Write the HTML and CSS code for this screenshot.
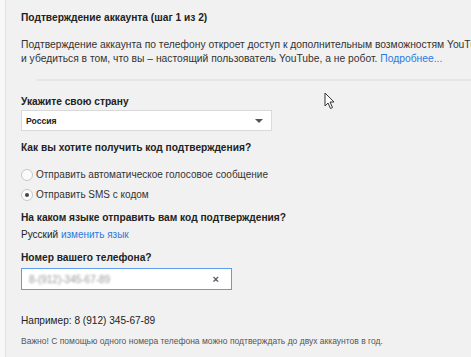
FILE: index.html
```html
<!DOCTYPE html>
<html lang="ru">
<head>
<meta charset="utf-8">
<link rel="stylesheet" href="styles.css">
</head>
<body>
<div class="page">
  <div class="rail"></div>
  <main class="content">
    <h1 class="title">Подтверждение аккаунта (шаг 1 из 2)</h1>
    <p class="intro">Подтверждение аккаунта по телефону откроет доступ к дополнительным возможностям YouTube<br>и убедиться в том, что вы – настоящий пользователь YouTube, а не робот. <a class="link" href="#">Подробнее...</a></p>
    <div class="sep"></div>
    <div class="label country">Укажите свою страну</div>
    <div class="select"><span class="select-text">Россия</span><span class="caret"></span></div>
    <div class="label q">Как вы хотите получить код подтверждения?</div>
    <div class="radios">
      <label class="radio"><span class="dot"></span>Отправить автоматическое голосовое сообщение</label>
      <label class="radio"><span class="dot on"></span>Отправить SMS с кодом</label>
    </div>
    <div class="label lang-q">На каком языке отправить вам код подтверждения?</div>
    <div class="lang">Русский <a class="link" href="#">изменить язык</a></div>
    <div class="label phone-q">Номер вашего телефона?</div>
    <div class="input"><span class="blur">8-(912)-345-67-89</span><span class="clear">×</span></div>
    <div class="example">Например: 8 (912) 345-67-89</div>
    <div class="note">Важно! С помощью одного номера телефона можно подтверждать до двух аккаунтов в год.</div>
  </main>
</div>
<svg class="cursor" width="12" height="18" viewBox="0 0 12 18"><path d="M1 1 L1 14 L4 11 L6.5 16.5 L8.5 15.5 L6 10 L10 10 Z" fill="#fff" stroke="#333" stroke-width="1" stroke-linejoin="round"/></svg>
</body>
</html>
```
FILE: styles.css
```css
* { box-sizing: border-box; }
html, body { margin: 0; padding: 0; }
body {
  background: #f1f1f1;
  font-family: "Liberation Sans", Arial, sans-serif;
  color: #333;
  width: 471px;
  height: 357px;
  overflow: hidden;
  position: relative;
}
.page { display: flex; height: 357px; }
.rail {
  width: 6px;
  flex: none;
  background: #f8f8f8;
  border-right: 1px solid #e3e3e3;
}
.content {
  flex: 1;
  padding: 11px 0 0 15px;
  white-space: nowrap;
  overflow: hidden;
}
.title {
  margin: 0;
  font-size: 10.2px;
  line-height: 13px;
  font-weight: bold;
  color: #222;
}
.intro {
  margin: 14px 0 0;
  font-size: 10.3px;
  line-height: 14px;
  color: #333;
}
.link { color: #2a7ae2; text-decoration: none; }
.sep {
  margin: 13px 0 0 15px;
  height: 2px;
  background: #e6e6e6;
}
.label {
  font-size: 10.2px;
  line-height: 13px;
  font-weight: bold;
  color: #222;
}
.label.country { margin-top: 14px; }
.select {
  margin-top: 2px;
  width: 251px;
  height: 21px;
  background: #fff;
  border: 1px solid #d9d9d9;
  display: flex;
  align-items: center;
  justify-content: space-between;
  padding: 0 8px 0 4px;
}
.select-text { font-size: 8.6px; font-weight: bold; color: #222; }
.caret {
  width: 0; height: 0;
  border-left: 4px solid transparent;
  border-right: 4px solid transparent;
  border-top: 4px solid #555;
}
.label.q { margin-top: 10px; }
.radios { margin-top: 14px; display: flex; flex-direction: column; gap: 7px; }
.radio {
  display: flex;
  align-items: center;
  font-size: 10px;
  line-height: 13px;
  color: #333;
}
.dot {
  width: 12px; height: 12px;
  border-radius: 50%;
  border: 1px solid #c8c8c8;
  background: #fafafa;
  margin-right: 3px;
  position: relative;
}
.dot.on::after {
  content: "";
  position: absolute;
  left: 3px; top: 3px;
  width: 4px; height: 4px;
  border-radius: 50%;
  background: #444;
}
.label.lang-q { margin-top: 10px; }
.lang { font-size: 10px; line-height: 13px; margin-top: 4px; color: #222; }
.label.phone-q { margin-top: 10px; }
.input {
  margin-top: 4px;
  width: 211px;
  height: 22px;
  background: #fff;
  border: 1px solid #5d9cec;
  display: flex;
  align-items: center;
  justify-content: space-between;
  padding: 0 12px 0 7px;
}
.blur { font-size: 10px; color: #999; filter: blur(1px); }
.clear { font-size: 11px; font-weight: bold; color: #556; }
.example { margin-top: 24px; font-size: 10.1px; line-height: 13px; color: #222; }
.note { margin-top: 9px; font-size: 8.5px; line-height: 11px; color: #555; }
.cursor { position: absolute; left: 324px; top: 92px; }
```
